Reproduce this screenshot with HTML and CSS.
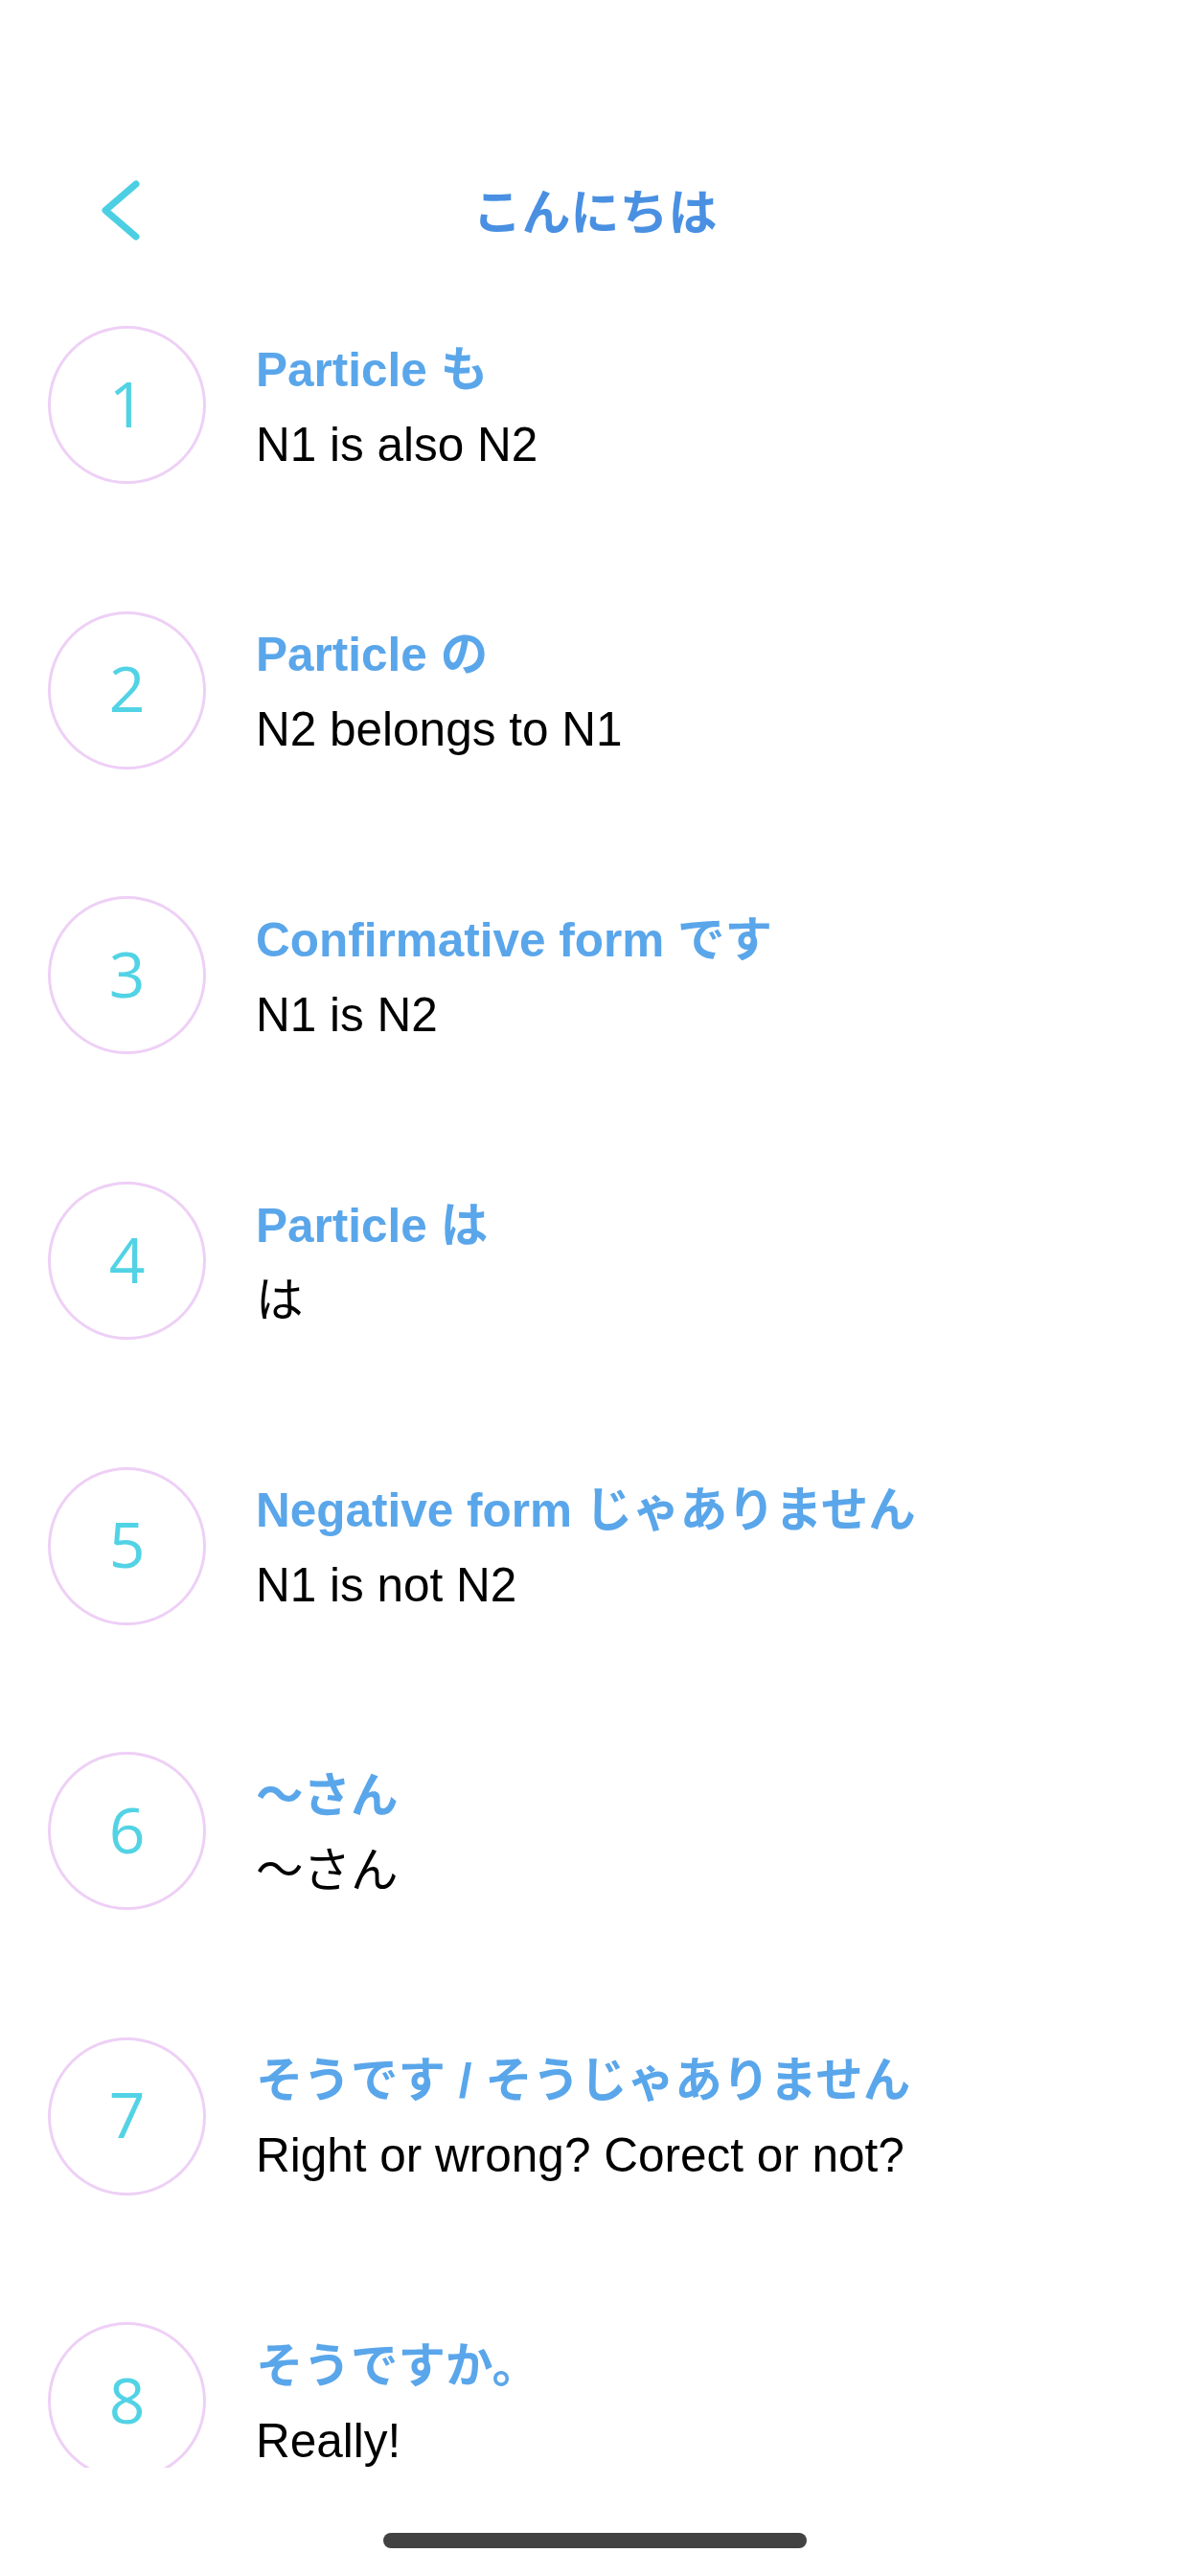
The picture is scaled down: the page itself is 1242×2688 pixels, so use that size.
FILE: index.html
```html
<!DOCTYPE html>
<html lang="ja">
<head>
<meta charset="utf-8">
<title>こんにちは</title>
<link rel="stylesheet" href="styles.css">
</head>
<body>
<div class="screen">
  <div class="status"></div>
  <header class="nav">
    <div class="nav-left">
      <svg class="back" width="42" height="65" viewBox="0 0 42 65" aria-label="Back">
        <path d="M37 5 L5 32.5 L37 60" fill="none" stroke="#4ccfe2" stroke-width="7" stroke-linecap="round" stroke-linejoin="round"/>
      </svg>
    </div>
    <h1 class="title">こんにちは</h1>
    <div class="nav-right"></div>
  </header>
  <main class="list">
    <div class="row">
      <div class="badge">1</div>
      <div class="text"><div class="heading">Particle <span class="jp">も</span></div><div class="sub">N1 is also N2</div></div>
    </div>
    <div class="row">
      <div class="badge">2</div>
      <div class="text"><div class="heading">Particle <span class="jp">の</span></div><div class="sub">N2 belongs to N1</div></div>
    </div>
    <div class="row">
      <div class="badge">3</div>
      <div class="text"><div class="heading">Confirmative form <span class="jp">です</span></div><div class="sub">N1 is N2</div></div>
    </div>
    <div class="row">
      <div class="badge">4</div>
      <div class="text"><div class="heading">Particle <span class="jp">は</span></div><div class="sub">は</div></div>
    </div>
    <div class="row">
      <div class="badge">5</div>
      <div class="text"><div class="heading">Negative form <span class="jp">じゃありません</span></div><div class="sub">N1 is not N2</div></div>
    </div>
    <div class="row">
      <div class="badge">6</div>
      <div class="text"><div class="heading"><span class="jp">〜さん</span></div><div class="sub">〜さん</div></div>
    </div>
    <div class="row">
      <div class="badge">7</div>
      <div class="text"><div class="heading"><span class="jp">そうです</span> / <span class="jp">そうじゃありません</span></div><div class="sub">Right or wrong? Corect or not?</div></div>
    </div>
    <div class="row">
      <div class="badge">8</div>
      <div class="text"><div class="heading"><span class="jp">そうですか。</span></div><div class="sub">Really!</div></div>
    </div>
  </main>
  <div class="home-area"><div class="home-indicator"></div></div>
</div>
</body>
</html>
```

FILE: styles.css
```css
html, body {
  margin: 0;
  padding: 0;
  background: #ffffff;
}
body {
  width: 1242px;
  height: 2688px;
  overflow: hidden;
  font-family: "Liberation Sans", "Noto Sans CJK JP", sans-serif;
}
.screen {
  display: flex;
  flex-direction: column;
  width: 1242px;
  height: 2688px;
}
.status {
  height: 162px;
  flex: none;
}
.nav {
  height: 112px;
  flex: none;
  display: grid;
  grid-template-columns: 1fr auto 1fr;
  align-items: center;
}
.nav-left {
  display: flex;
  align-items: center;
  padding-left: 105px;
  padding-top: 3px;
}
.back {
  display: block;
}
.title {
  margin: 0;
  font-family: "Noto Sans CJK JP", sans-serif;
  font-weight: 700;
  font-size: 51px;
  line-height: 60px;
  color: #4a90e2;
}
.list {
  height: 2301px;
  flex: none;
  overflow: hidden;
}
.row {
  height: 297.6px;
  display: flex;
  align-items: center;
  padding-left: 50px;
  gap: 52px;
}
.badge {
  flex: none;
  width: 165px;
  height: 165px;
  box-sizing: border-box;
  border: 3px solid #eed0f6;
  border-radius: 50%;
  display: flex;
  align-items: center;
  justify-content: center;
  font-family: "Open Sans", sans-serif;
  font-size: 66px;
  line-height: 1;
  color: #52d3e5;
  padding-bottom: 6px;
}
.text {
  display: flex;
  flex-direction: column;
  gap: 20px;
}
.heading {
  font-size: 49.5px;
  line-height: 58px;
  font-weight: 700;
  color: #5aa6ea;
  white-space: nowrap;
}
.jp {
  font-family: "Noto Sans CJK JP", sans-serif;
  font-weight: 700;
}
.sub {
  font-size: 49.5px;
  line-height: 58px;
  color: #000000;
  white-space: nowrap;
}
.home-area {
  flex: 1;
  display: flex;
  justify-content: center;
  padding-top: 68px;
}
.home-indicator {
  width: 442px;
  height: 16px;
  border-radius: 8px;
  background: #424242;
}
```
